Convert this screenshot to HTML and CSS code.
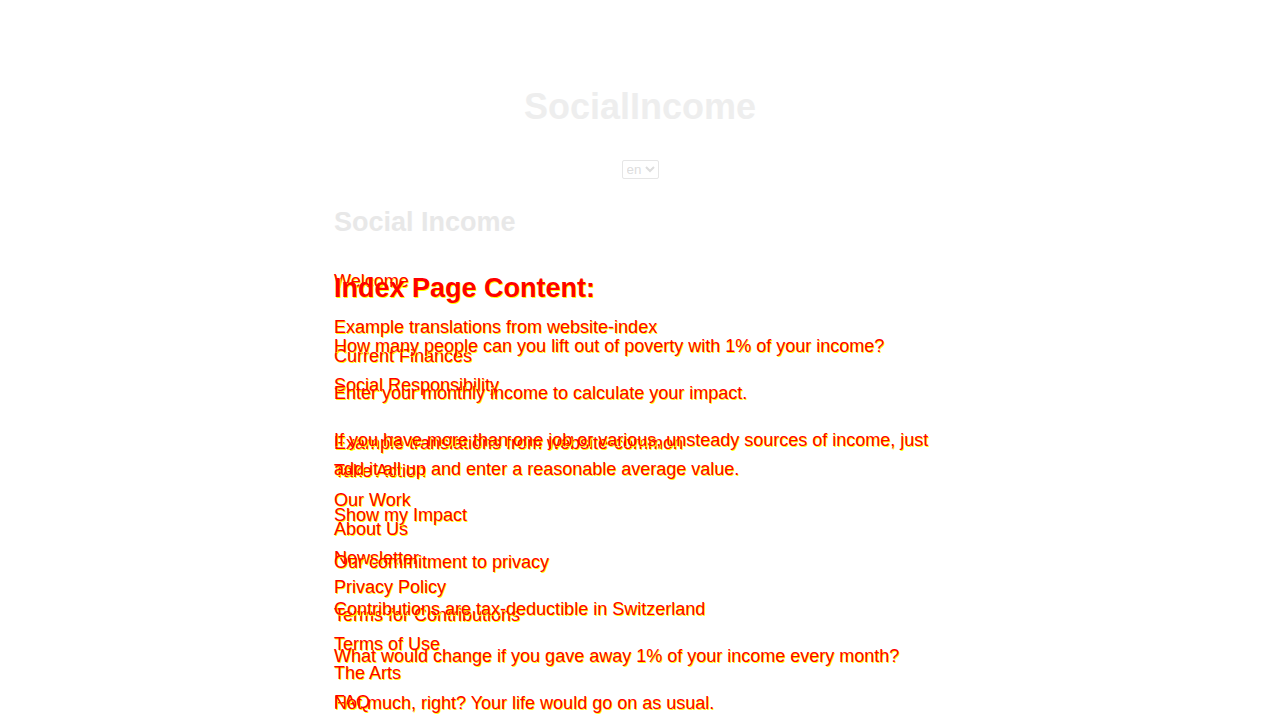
FILE: index.html
```html
<!DOCTYPE html>
<html lang="en">
<head>
<meta charset="utf-8">
<title>SocialIncome</title>
<link rel="stylesheet" href="styles.css">
</head>
<body>
<div class="page">
  <h1 class="brand">SocialIncome</h1>
  <div class="lang">
    <select class="lang-select"><option>en</option><option>de</option></select>
  </div>
  <h2 class="site-title">Social Income</h2>
  <div class="stack">
    <nav class="nav">
      <p class="nav-welcome">Welcome</p>
      <ul class="nav-group">
        <li class="nav-head">Example translations from website-index</li>
        <li>Current Finances</li>
        <li>Social Responsibility</li>
      </ul>
      <ul class="nav-group">
        <li class="nav-head">Example translations from website-common</li>
        <li>Take Action</li>
        <li>Our Work</li>
        <li>About Us</li>
        <li>Newsletter</li>
        <li>Privacy Policy</li>
        <li>Terms for Contributions</li>
        <li>Terms of Use</li>
        <li>The Arts</li>
        <li>FAQ</li>
      </ul>
    </nav>
    <main class="content">
      <h2 class="content-title">Index Page Content:</h2>
      <p>How many people can you lift out of poverty with 1% of your income?</p>
      <p>Enter your monthly income to calculate your impact.</p>
      <p>If you have more than one job or various, unsteady sources of income, just add it all up and enter a reasonable average value.</p>
      <p>Show my Impact</p>
      <p>Our commitment to privacy</p>
      <p>Contributions are tax-deductible in Switzerland</p>
      <p>What would change if you gave away 1% of your income every month?</p>
      <p>Not much, right? Your life would go on as usual.</p>
    </main>
  </div>
</div>
</body>
</html>
```

FILE: styles.css
```css
html, body {
  margin: 0;
  padding: 0;
  background: #ffffff;
}

body {
  font-family: "Liberation Sans", Arial, sans-serif;
  font-size: 18px;
  line-height: 1.6;
  color: #ff0000;
}

.page {
  width: 612px;
  margin: 0 auto;
  padding-top: 78px;
}

.brand {
  margin: 0;
  font-size: 36px;
  line-height: 57.6px;
  font-weight: bold;
  text-align: center;
  color: #eeeeee;
}

.lang {
  display: flex;
  justify-content: center;
  margin-top: 24px;
  height: 19px;
}

.lang-select {
  font-family: "Liberation Sans", Arial, sans-serif;
  font-size: 13.333px;
  height: 19px;
  color: #dddddd;
  border: 1px solid #e6e6e6;
  border-radius: 2px;
  background: #ffffff;
  padding: 0;
}

.site-title {
  margin: 22.5px 0 22.4px;
  font-size: 27px;
  line-height: 43.2px;
  font-weight: bold;
  color: #e8e8e8;
}

.stack {
  display: grid;
}

.nav,
.content {
  grid-area: 1 / 1;
  color: #ff0000;
  text-shadow: 1px 1px 0 #ffff00;
}

.nav {
  padding-top: 0;
}

.nav-welcome {
  margin: 0 0 18px;
}

.nav-group {
  list-style: none;
  margin: 0 0 28.8px;
  padding: 0;
}

.content-title {
  margin: 0 0 22.4px;
  font-size: 27px;
  line-height: 43.2px;
  font-weight: bold;
}

.content p {
  margin: 0 0 18px;
}
```
